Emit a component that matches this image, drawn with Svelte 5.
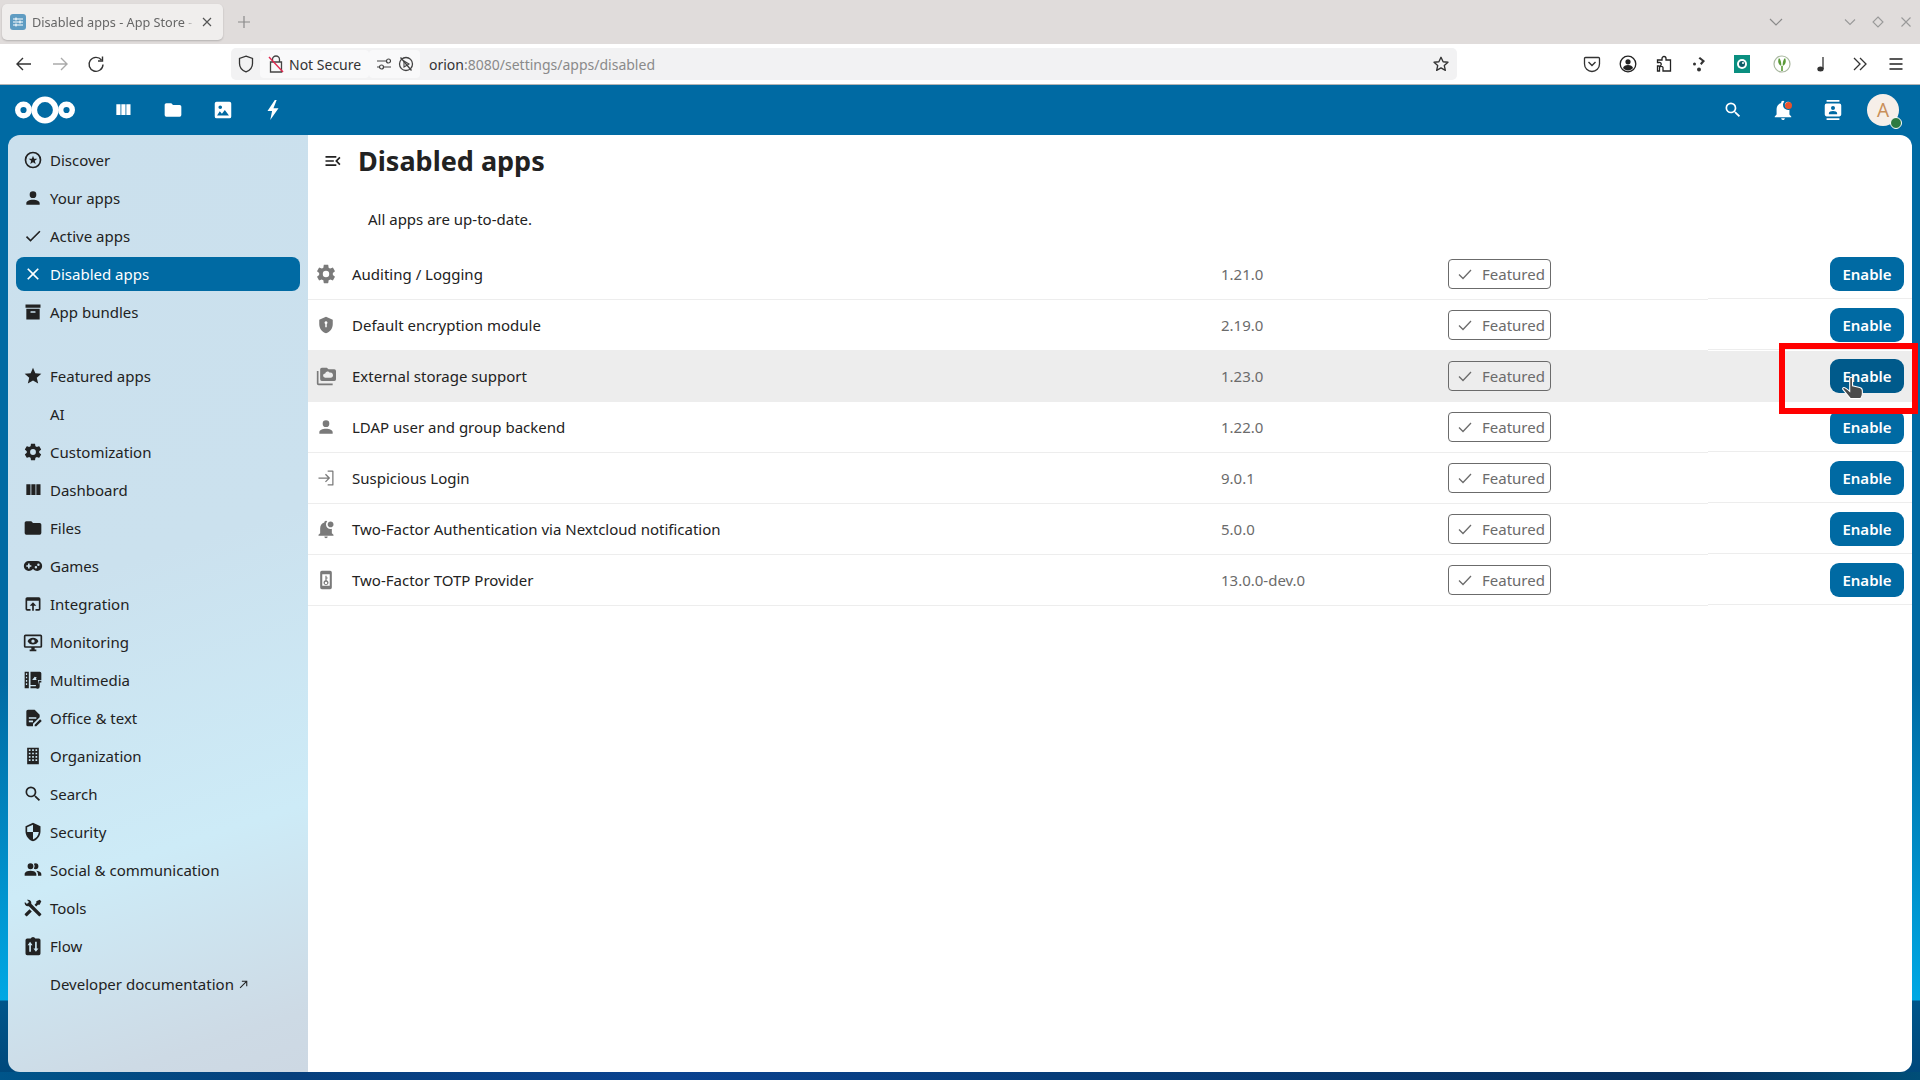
<script>
    const mdi = {
        star: 'M12 2a10 10 0 1 0 0 20a10 10 0 0 0 0-20zM12 4a8 8 0 1 1 0 16a8 8 0 0 1 0-16zM12 6.8L13.4 10.4L17.2 10.6L14.2 13L15.2 16.7L12 14.6L8.8 16.7L9.8 13L6.8 10.6L10.6 10.4Z',
        account: 'M12,4A4,4 0 0,1 16,8A4,4 0 0,1 12,12A4,4 0 0,1 8,8A4,4 0 0,1 12,4M12,14C16.42,14 20,15.79 20,18V20H4V18C4,15.79 7.58,14 12,14Z',
        check: 'M21,7L9,19L3.5,13.5L4.91,12.09L9,16.17L19.59,5.59L21,7Z',
        close: 'M19,6.41L17.59,5L12,10.59L6.41,5L5,6.41L10.59,12L5,17.59L6.41,19L12,13.41L17.59,19L19,17.59L13.41,12L19,6.41Z',
        archive: 'M3,3H21V7H3V3M4,8H20V21H4V8M9.5,11A0.5,0.5 0 0,0 9,11.5V13H15V11.5A0.5,0.5 0 0,0 14.5,11H9.5Z',
        starFull: 'M12,17.27L18.18,21L16.54,13.97L22,9.24L14.81,8.62L12,2L9.19,8.62L2,9.24L7.45,13.97L5.82,21L12,17.27Z',
        cog: 'M12,15.5A3.5,3.5 0 0,1 8.5,12A3.5,3.5 0 0,1 12,8.5A3.5,3.5 0 0,1 15.5,12A3.5,3.5 0 0,1 12,15.5M19.43,12.97C19.47,12.65 19.5,12.33 19.5,12C19.5,11.67 19.47,11.34 19.43,11L21.54,9.37C21.73,9.22 21.78,8.95 21.66,8.73L19.66,5.27C19.54,5.05 19.27,4.96 19.05,5.05L16.56,6.05C16.04,5.66 15.5,5.32 14.87,5.07L14.5,2.42C14.46,2.18 14.25,2 14,2H10C9.75,2 9.54,2.18 9.5,2.42L9.13,5.07C8.5,5.32 7.96,5.66 7.44,6.05L4.95,5.05C4.73,4.96 4.46,5.05 4.34,5.27L2.34,8.73C2.21,8.95 2.27,9.22 2.46,9.37L4.57,11C4.53,11.34 4.5,11.67 4.5,12C4.5,12.33 4.53,12.65 4.57,12.97L2.46,14.63C2.27,14.78 2.21,15.05 2.34,15.27L4.34,18.73C4.46,18.95 4.73,19.03 4.95,18.95L7.44,17.94C7.96,18.34 8.5,18.68 9.13,18.93L9.5,21.58C9.54,21.82 9.75,22 10,22H14C14.25,22 14.46,21.82 14.5,21.58L14.87,18.93C15.5,18.67 16.04,18.34 16.56,17.94L19.05,18.95C19.27,19.03 19.54,18.95 19.66,18.73L21.66,15.27C21.78,15.05 21.73,14.78 21.54,14.63L19.43,12.97Z',
        columns: 'M16,5V18H21V5M4,18H9V5H4M10,18H15V5H10V18Z',
        folder: 'M10,4H4C2.89,4 2,4.89 2,6V18A2,2 0 0,0 4,20H20A2,2 0 0,0 22,18V8C22,6.89 21.1,6 20,6H12L10,4Z',
        gamepad: 'M7,6H17A6,6 0 0,1 23,12A6,6 0 0,1 17,18C15.22,18 13.63,17.23 12.53,16H11.47C10.37,17.23 8.78,18 7,18A6,6 0 0,1 1,12A6,6 0 0,1 7,6M6,9V11H4V13H6V15H8V13H10V11H8V9H6M15.5,12A1.5,1.5 0 0,0 14,13.5A1.5,1.5 0 0,0 15.5,15A1.5,1.5 0 0,0 17,13.5A1.5,1.5 0 0,0 15.5,12M18.5,9A1.5,1.5 0 0,0 17,10.5A1.5,1.5 0 0,0 18.5,12A1.5,1.5 0 0,0 20,10.5A1.5,1.5 0 0,0 18.5,9Z',
        integration: 'M12,10L8,14H11V20H13V14H16M19,4H5C3.89,4 3,4.9 3,6V18A2,2 0 0,0 5,20H9V18H5V8H19V18H15V20H19A2,2 0 0,0 21,18V6A2,2 0 0,0 19,4Z',
        monitor: 'M3 3h18a2 2 0 0 1 2 2v12a2 2 0 0 1-2 2h-7v2h2v2H8v-2h2v-2H3a2 2 0 0 1-2-2V5a2 2 0 0 1 2-2zM3 5v12h18V5H3zM12 7c-3 0-5.5 1.6-6.5 4c1 2.4 3.5 4 6.5 4s5.5-1.6 6.5-4c-1-2.4-3.5-4-6.5-4zM12 9a2 2 0 1 1 0 4a2 2 0 0 1 0-4z',
        media: 'M2 2h5v20H2zM3.5 4v2H5V4zM3.5 8v2H5V8zM3.5 12v2H5v-2zM3.5 16v2H5v-2zM9 2h11a2 2 0 0 1 2 2v8H18v6H9zM11 12h5.5l-1-1.5 1-1.5-2.5-1zM19 13h3v2h-2v5a2.5 2.5 0 1 1-2-2.45zM9 19.5h6.5V22H9z',
        office: 'M6 2h8l6 6v3l-8 8v3H6a2 2 0 0 1-2-2V4a2 2 0 0 1 2-2zM7 11v2h9v-2zM7 15v2h5v-2zM14 22v-2l6.5-6.5 2 2L16 22z',
        search: 'M9.5,3A6.5,6.5 0 0,1 16,9.5C16,11.11 15.41,12.59 14.44,13.73L14.71,14H15.5L20.5,19L19,20.5L14,15.5V14.71L13.73,14.44C12.59,15.41 11.11,16 9.5,16A6.5,6.5 0 0,1 3,9.5A6.5,6.5 0 0,1 9.5,3M9.5,5C7,5 5,7 5,9.5C5,12 7,14 9.5,14C12,14 14,12 14,9.5C14,7 12,5 9.5,5Z',
        security: 'M12,1L3,5V11C3,16.55 6.84,21.74 12,23C17.16,21.74 21,16.55 21,11V5L12,1M12,12H19C18.47,16.12 15.72,19.79 12,20.93V12H5V6.3L12,3.19V12Z',
        people: 'M16 17V19H2V17S2 13 9 13 16 17 16 17M12.5 7.5A3.5 3.5 0 1 0 9 11A3.5 3.5 0 0 0 12.5 7.5M15.94 13A5.32 5.32 0 0 1 18 17V19H22V17S22 13.37 15.94 13M15 4A3.39 3.39 0 0 0 13.07 4.59A5 5 0 0 1 13.07 10.41A3.39 3.39 0 0 0 15 11A3.5 3.5 0 0 0 15 4Z',
        tools: 'M21.71 20.29L20.29 21.71A1 1 0 0 1 18.88 21.71L7 9.85A3.81 3.81 0 0 1 6 10A4 4 0 0 1 2.22 4.7L4.76 7.24L5.29 6.71L6.71 5.29L7.24 4.76L4.7 2.22A4 4 0 0 1 10 6A3.81 3.81 0 0 1 9.85 7L21.71 18.88A1 1 0 0 1 21.71 20.29M2.29 18.88A1 1 0 0 0 2.29 20.29L3.71 21.71A1 1 0 0 0 5.12 21.71L10.59 16.25L7.76 13.42M20 2L16 4V6L13.83 8.17L15.83 10.17L18 8H20L22 4Z',
        flow: 'M19 3h-4.2a3 3 0 0 0-5.6 0H5a2 2 0 0 0-2 2v16a2 2 0 0 0 2 2h14a2 2 0 0 0 2-2V5a2 2 0 0 0-2-2zM8.5 7l3 4H9.5v8h-2v-8H5.5zM14.5 7h2v8h2l-3 4-3-4h2z',
        arrow: 'M5,17.59L15.59,7H9V5H19V15H17V8.41L6.41,19L5,17.59Z',
        menuOpen: 'M21,15.61L19.59,17L14.58,12L19.59,7L21,8.39L17.44,12L21,15.61M3,6H16V8H3V6M3,13V11H13V13H3M3,18V16H16V18H3Z',
        shieldKey: 'M12 1L3 5v6c0 5.55 3.84 10.74 9 12 5.16-1.26 9-6.45 9-12V5l-9-4zM12 7a2 2 0 0 1 1 3.7V15h-2v-4.3A2 2 0 0 1 12 7z',
        storage: 'M22 4h-7l-2-2H7a2 2 0 0 0-2 2v12a2 2 0 0 0 2 2h15a2 2 0 0 0 2-2V6a2 2 0 0 0-2-2zM1 6v15a2 2 0 0 0 2 2h17v-2H3V6zM11 14a2.5 2.5 0 0 1 0-5a3 3 0 0 1 5.5-1a3 3 0 0 1 1.5 6z',
        login: 'M14 3h6a1 1 0 0 1 1 1v16a1 1 0 0 1-1 1h-6v-1.5h5.5v-15H14zM3 11.25h11.1l-3.3-3.3 1.1-1.05L17 12l-5.1 5.1-1.1-1.05 3.3-3.3H3z',
        bellDot: 'M21,6.5C21,8.43 19.43,10 17.5,10C15.57,10 14,8.43 14,6.5C14,4.57 15.57,3 17.5,3C19.43,3 21,4.57 21,6.5M19,11.79C18.5,11.92 18,12 17.5,12A5.5,5.5 0 0,1 12,6.5C12,5.03 12.58,3.7 13.5,2.71C13.15,2.28 12.61,2 12,2C10.9,2 10,2.9 10,4V4.29C7.03,5.17 5,7.9 5,11V17L3,19V20H21V19L19,17V11.79M12,23C13.11,23 14,22.11 14,21H10A2,2 0 0,0 12,23Z',
        phoneKey: 'M7 1h10a2 2 0 0 1 2 2v18a2 2 0 0 1-2 2H7a2 2 0 0 1-2-2V3a2 2 0 0 1 2-2zM7.5 5v14h9V5zM11.3 7h1.4v2H14v1.2h-1.3v2.1a3 3 0 1 1-1.4 0zM12 14a1.5 1.5 0 1 0 0 3a1.5 1.5 0 0 0 0-3z',
        bolt: 'M14 1L6 13h5l-2 10 9-13h-5.5l3.5-9z',
        image: 'M5 3h14a2 2 0 0 1 2 2v14a2 2 0 0 1-2 2H5a2 2 0 0 1-2-2V5a2 2 0 0 1 2-2zM9 7a2 2 0 1 0 0 4a2 2 0 0 0 0-4zM5.5 18h13L14 12l-3.2 4-2.3-2.6z',
        contacts: 'M5 1h14v2H5zM5 21h14v2H5zM5 5h14a2 2 0 0 1 2 2v10a2 2 0 0 1-2 2H5a2 2 0 0 1-2-2V7a2 2 0 0 1 2-2zM12 7.5a2.2 2.2 0 1 0 0 4.4a2.2 2.2 0 0 0 0-4.4zM7.5 16.5h9v-1c0-1.6-2.2-2.5-4.5-2.5s-4.5.9-4.5 2.5z'
    };

    let domain = 'M5 2h14v20H5z';
    for (const y of [4, 8, 12, 16]) {
        for (const x of [7, 11, 15]) {
            domain += `M${x} ${y}v2h2v-2z`;
        }
    }

    const topNav = [
        { label: 'Discover', d: mdi.star },
        { label: 'Your apps', d: mdi.account },
        { label: 'Active apps', d: mdi.check },
        { label: 'Disabled apps', d: mdi.close, active: true },
        { label: 'App bundles', d: mdi.archive }
    ];

    const categories = [
        { label: 'Featured apps', d: mdi.starFull },
        { label: 'AI' },
        { label: 'Customization', d: mdi.cog },
        { label: 'Dashboard', d: mdi.columns },
        { label: 'Files', d: mdi.folder },
        { label: 'Games', d: mdi.gamepad },
        { label: 'Integration', d: mdi.integration },
        { label: 'Monitoring', d: mdi.monitor },
        { label: 'Multimedia', d: mdi.media },
        { label: 'Office & text', d: mdi.office },
        { label: 'Organization', d: domain },
        { label: 'Search', d: mdi.search },
        { label: 'Security', d: mdi.security },
        { label: 'Social & communication', d: mdi.people },
        { label: 'Tools', d: mdi.tools },
        { label: 'Flow', d: mdi.flow }
    ];

    const apps = [
        { name: 'Auditing / Logging', version: '1.21.0', d: mdi.cog, size: 22 },
        { name: 'Default encryption module', version: '2.19.0', d: mdi.shieldKey, size: 18 },
        { name: 'External storage support', version: '1.23.0', d: mdi.storage, size: 20, hover: true },
        { name: 'LDAP user and group backend', version: '1.22.0', d: mdi.account, size: 20 },
        { name: 'Suspicious Login', version: '9.0.1', d: mdi.login, size: 20 },
        { name: 'Two-Factor Authentication via Nextcloud notification', version: '5.0.0', d: mdi.bellDot, size: 20 },
        { name: 'Two-Factor TOTP Provider', version: '13.0.0-dev.0', d: mdi.phoneKey, size: 20 }
    ];
</script>

{#snippet icon(d, size = 20)}
    <svg class="ic" width={size} height={size} viewBox="0 0 24 24" fill="currentColor"><path {d} /></svg>
{/snippet}

<div class="screen">
    <!-- browser tabs -->
    <div class="tabbar">
        <div class="tab">
            <svg class="favicon" width="16" height="16" viewBox="0 0 16 16">
                <rect width="16" height="16" rx="3" fill="#5f9cc2" />
                <path d="M3 5h10M3 8h10M3 11h10" stroke="#fff" stroke-width="1.1" />
                <path d="M6 3.5v3M10 6.5v3M6 9.5v3" stroke="#fff" stroke-width="1.1" />
            </svg>
            <span class="tab-title">Disabled apps - App Store -</span>
            <svg class="tab-close" width="12" height="12" viewBox="0 0 12 12"><path d="M2 2l8 8M10 2l-8 8" stroke="#555" stroke-width="1.2" /></svg>
        </div>
        <svg class="new-tab" width="14" height="14" viewBox="0 0 14 14"><path d="M7 1v12M1 7h12" stroke="#8a8a8a" stroke-width="1.2" /></svg>
        <svg class="tab-list" width="16" height="16" viewBox="0 0 16 16"><path d="M2 5l6 6 6-6" fill="none" stroke="#8a8a8a" stroke-width="1.2" /></svg>
        <div class="window-btns">
            <span><svg width="12" height="12" viewBox="0 0 12 12"><path d="M1 3.5l5 5 5-5" fill="none" stroke="#999" stroke-width="1.1" /></svg></span>
            <span><svg width="12" height="12" viewBox="0 0 12 12"><path d="M6 1l5 5-5 5-5-5z" fill="none" stroke="#999" stroke-width="1.1" /></svg></span>
            <span><svg width="12" height="12" viewBox="0 0 12 12"><path d="M1.5 1.5l9 9M10.5 1.5l-9 9" stroke="#999" stroke-width="1.1" /></svg></span>
        </div>
    </div>

    <!-- browser toolbar -->
    <div class="toolbar">
        <div class="tool-nav">
            <span class="tool"><svg width="18" height="18" viewBox="0 0 18 18"><path d="M16 9H2M8 3L2 9l6 6" fill="none" stroke="#333" stroke-width="1.4" /></svg></span>
            <span class="tool"><svg width="18" height="18" viewBox="0 0 18 18"><path d="M2 9h14M10 3l6 6-6 6" fill="none" stroke="#aaa" stroke-width="1.4" /></svg></span>
            <span class="tool"><svg width="18" height="18" viewBox="0 0 18 18"><path d="M14.5 5A7 7 0 1 0 16 9.5" fill="none" stroke="#333" stroke-width="1.4" /><path d="M15.5 1.5v4.5H11" fill="none" stroke="#333" stroke-width="1.4" /></svg></span>
        </div>
        <div class="urlbar">
            <span class="url-shield">
                <svg width="16" height="18" viewBox="0 0 16 18"><path d="M8 1.2l6.5 2.2v5c0 4-2.8 7-6.5 8.4-3.700-1.400-6.500-4.400-6.500-8.400v-5z" fill="none" stroke="#333" stroke-width="1.3" /></svg>
            </span>
            <span class="url-box lock">
                <svg width="16" height="20" viewBox="0 0 16 20">
                    <path d="M4.500 8V5.500a3.500 3.500 0 0 1 7 0V8M2.500 8h11v10h-11z" fill="none" stroke="#444" stroke-width="1.3" />
                    <path d="M1 3l14 15" stroke="#e22850" stroke-width="1.4" />
                </svg>
                Not Secure
            </span>
            <span class="url-box perms">
                <svg width="16" height="14" viewBox="0 0 16 14"><path d="M1 4h9M1 10h2M8 10h7" stroke="#444" stroke-width="1.2" /><circle cx="12.500" cy="4" r="2" fill="none" stroke="#444" stroke-width="1.2" /><circle cx="5.500" cy="10" r="2" fill="none" stroke="#444" stroke-width="1.2" /></svg>
                <svg width="16" height="16" viewBox="0 0 16 16"><circle cx="8" cy="8" r="6.500" fill="none" stroke="#444" stroke-width="1.3" /><path d="M6 5v6l5-3z" fill="none" stroke="#444" stroke-width="1.1" /><path d="M2.500 1.500l11 13" stroke="#444" stroke-width="1.3" /></svg>
            </span>
            <span class="url-text">orion<span class="url-rest">:8080/settings/apps/disabled</span></span>
            <svg class="url-star" width="18" height="18" viewBox="0 0 24 24"><path d="M12 3l2.800 6 6.500.7-4.900 4.400 1.400 6.400L12 17.200 6.200 20.500l1.400-6.400L2.700 9.700 9.200 9z" fill="none" stroke="#333" stroke-width="1.800" stroke-linejoin="round" /></svg>
        </div>
        <div class="tool-right">
            <span class="tool"><svg width="18" height="18" viewBox="0 0 18 18"><path d="M2.500 2.500h13a1 1 0 0 1 1 1V9a7.500 7.500 0 0 1-15 0V3.500a1 1 0 0 1 1-1z" fill="none" stroke="#333" stroke-width="1.3" /><path d="M5.500 7L9 10.500 12.500 7" fill="none" stroke="#333" stroke-width="1.4" /></svg></span>
            <span class="tool"><svg width="18" height="18" viewBox="0 0 18 18"><circle cx="9" cy="9" r="7.800" fill="none" stroke="#222" stroke-width="1.300" /><circle cx="9" cy="6.800" r="2.600" fill="#222" /><path d="M4 13c.5-2 2.500-3 5-3s4.500 1 5 3c-1.200 1.600-3 2.500-5 2.500S5.200 14.600 4 13z" fill="#222" /></svg></span>
            <span class="tool"><svg width="18" height="18" viewBox="0 0 18 18"><path d="M7 3.500a2 2 0 0 1 4 0V5h4.500v11H8v-2.500a1.800 1.800 0 1 0-3.500 0V16H2.500v-5H4a1.800 1.800 0 1 0 0-3.500H2.500V5H7z" fill="none" stroke="#222" stroke-width="1.300" /></svg></span>
            <span class="tool gap"><svg width="18" height="18" viewBox="0 0 18 18"><path d="M9 2l5 4-3.500 4-1.500-1.500L11 6 7.500 3.500z" fill="#333" /><circle cx="3.500" cy="9" r="1.500" fill="#333" /><circle cx="8" cy="14.500" r="2" fill="#333" /></svg></span>
            <span class="tool wide"><svg width="16" height="18" viewBox="0 0 16 18"><rect width="16" height="18" fill="#0a8f80" /><circle cx="8" cy="9" r="5" fill="#fff" /><circle cx="8" cy="9" r="3" fill="#0d5c66" /><circle cx="9" cy="8" r="1" fill="#fff" /></svg></span>
            <span class="tool wide"><svg width="18" height="18" viewBox="0 0 18 18"><circle cx="9" cy="9" r="8" fill="#fff" stroke="#a9b8a0" stroke-width="1.200" /><path d="M6 3c-1.500 3-1 6 2.200 8C8.500 8 8 5 6 3zM12 3c1.500 3 1 6-2.200 8C9.500 8 10 5 12 3z" fill="#5a9a38" /><path d="M9 11v5" stroke="#5a9a38" stroke-width="1.600" /></svg></span>
            <span class="tool wide"><svg width="18" height="18" viewBox="0 0 18 18"><ellipse cx="7.500" cy="14" rx="3.200" ry="2.500" fill="#333" /><path d="M10 14V2" stroke="#333" stroke-width="1.300" /></svg></span>
            <span class="tool"><svg width="16" height="16" viewBox="0 0 16 16"><path d="M2 2l6 6-6 6M8 2l6 6-6 6" fill="none" stroke="#333" stroke-width="1.300" /></svg></span>
            <span class="tool"><svg width="16" height="16" viewBox="0 0 16 16"><path d="M1.500 3h13M1.500 8h13M1.500 13h13" stroke="#222" stroke-width="1.400" /></svg></span>
        </div>
    </div>

    <!-- nextcloud header -->
    <header class="nc-header">
        <svg class="logo" width="60" height="28" viewBox="0 0 60 28">
            <circle cx="30" cy="14" r="10.700" fill="none" stroke="#fff" stroke-width="5.600" />
            <circle cx="8.500" cy="14" r="5.800" fill="none" stroke="#fff" stroke-width="5.400" />
            <circle cx="51.500" cy="14" r="5.800" fill="none" stroke="#fff" stroke-width="5.400" />
        </svg>
        <div class="nc-apps">
            <span>{@render icon(mdi.columns)}</span>
            <span>{@render icon(mdi.folder)}</span>
            <span>{@render icon(mdi.image, 22)}</span>
            <span>{@render icon(mdi.bolt, 22)}</span>
        </div>
        <div class="nc-right">
            <span>{@render icon(mdi.search)}</span>
            <span class="bell">
                {@render icon(mdi.bellDot, 22)}
                <i class="bell-dot"></i>
            </span>
            <span>{@render icon(mdi.contacts, 22)}</span>
            <span class="avatar-wrap">
                <span class="avatar">A</span>
                <i class="status"></i>
            </span>
        </div>
    </header>

    <div class="content">
        <nav class="sidebar">
            <ul>
                {#each topNav as item}
                    <li class:active={item.active}>
                        <span class="nav-ic">{@render icon(item.d)}</span>{item.label}
                    </li>
                {/each}
            </ul>
            <ul class="cats">
                {#each categories as item}
                    <li>
                        <span class="nav-ic">{#if item.d}{@render icon(item.d)}{/if}</span>{item.label}
                    </li>
                {/each}
                <li>
                    <span class="nav-ic"></span>Developer documentation
                    <span class="ext">{@render icon(mdi.arrow, 13)}</span>
                </li>
            </ul>
        </nav>

        <main class="main">
            <div class="head">
                <span class="toggle">{@render icon(mdi.menuOpen)}</span>
                <h1>Disabled apps</h1>
            </div>
            <p class="uptodate">All apps are up-to-date.</p>

            <div class="rows">
                {#each apps as app}
                    <div class="row" class:hover={app.hover}>
                        <div class="cell name">
                            <span class="app-ic">{@render icon(app.d, app.size)}</span>
                            {app.name}
                        </div>
                        <div class="cell version">{app.version}</div>
                        <div class="cell">
                            <span class="tag">
                                <svg width="16" height="16" viewBox="0 0 16 16"><path d="M2 8.500l4 4 8-8.500" fill="none" stroke="#6b6b6b" stroke-width="1.300" /></svg>
                                Featured
                            </span>
                        </div>
                        <div class="cell action">
                            <button>Enable</button>
                        </div>
                    </div>
                {/each}
            </div>
        </main>
    </div>

    <div class="strip"></div>

    <!-- annotation and mouse pointer on top of the page -->
    <div class="highlight"></div>
    <svg class="cursor" width="22" height="22" viewBox="0 0 20 20">
        <path d="M7 1.500a1.300 1.300 0 0 1 2.600 0V8l6.500 1.500c1.500.4 2.400 1.300 2.400 3v3c0 1.500-.5 2.500-1.500 4H7.500L1 11.500c-.8-1-.2-2 .8-2 .8 0 3 1.500 5.200 3.500z" fill="#4a4a4a" stroke="#fff" stroke-width="1" />
    </svg>
</div>

<style>
    :global(body) {
        margin: 0;
    }

    .screen {
        position: relative;
        display: flex;
        flex-direction: column;
        width: 1920px;
        height: 1080px;
        overflow: hidden;
        font-family: "Noto Sans", sans-serif;
        font-size: 15px;
        color: #222;
        background: linear-gradient(180deg, #006aa3 0, #006aa3 680px, #00a8e4 1000px, #00558a 1001px, #00477a 1080px);
    }

    .ic {
        display: block;
        flex-shrink: 0;
    }

    /* tabs */
    .tabbar {
        display: flex;
        align-items: center;
        height: 44px;
        background: #e0dcdb;
    }

    .tab {
        display: flex;
        align-items: center;
        width: 221px;
        height: 36px;
        margin-left: 2px;
        padding-left: 8px;
        box-sizing: border-box;
        background: #f0eeed;
        border-radius: 5px;
        box-shadow: 0 1px 2px rgba(0, 0, 0, .2);
    }

    .tab-title {
        width: 162px;
        margin-left: 6px;
        white-space: nowrap;
        font-size: 12.7px;
        color: #666;
        -webkit-mask-image: linear-gradient(90deg, #000 94%, transparent);
        mask-image: linear-gradient(90deg, #000 94%, transparent);
    }

    .tab-close {
        margin-left: 7px;
    }

    .new-tab {
        margin-left: 14px;
    }

    .tab-list {
        margin-left: auto;
    }

    .window-btns {
        display: flex;
        margin-left: 52px;
    }

    .window-btns span {
        display: flex;
        justify-content: center;
        width: 28px;
    }

    /* toolbar */
    .toolbar {
        display: flex;
        align-items: center;
        height: 40px;
        background: #fff;
        border-bottom: 1px solid #b4b4b4;
    }

    .tool-nav {
        display: flex;
        width: 231px;
        padding-left: 6px;
        box-sizing: border-box;
    }

    .tool {
        display: flex;
        align-items: center;
        justify-content: center;
        width: 36px;
        height: 32px;
    }

    .tool.wide {
        width: 40px;
    }

    .tool.gap {
        margin-right: 4px;
    }

    .urlbar {
        display: flex;
        align-items: center;
        width: 1226px;
        height: 32px;
        background: #f2f2f3;
        border-radius: 5px;
    }

    .url-shield {
        display: flex;
        justify-content: center;
        width: 29px;
    }

    .url-box {
        display: flex;
        align-items: center;
        height: 28px;
        background: #f9f9fa;
        border-radius: 4px;
    }

    .lock {
        gap: 5px;
        width: 109px;
        padding-left: 8px;
        box-sizing: border-box;
        font-size: 14px;
        color: #333;
    }

    .perms {
        gap: 6px;
        justify-content: center;
        width: 51px;
    }

    .url-text {
        margin-left: 9px;
        font-size: 14px;
        color: #333;
    }

    .url-rest {
        color: #8a8a8a;
    }

    .url-star {
        margin-left: auto;
        margin-right: 7px;
    }

    .tool-right {
        display: flex;
        margin-left: auto;
        margin-right: 6px;
    }

    /* nextcloud header */
    .nc-header {
        display: flex;
        align-items: center;
        height: 50px;
        color: #fff;
    }

    .logo {
        margin-left: 15px;
    }

    .nc-apps {
        display: flex;
        margin-left: 23px;
    }

    .nc-apps span,
    .nc-right span {
        display: flex;
        align-items: center;
        justify-content: center;
        width: 50px;
        height: 50px;
    }

    .nc-right {
        display: flex;
        margin-left: auto;
        margin-right: 12px;
    }

    .bell,
    .avatar-wrap {
        position: relative;
    }

    .bell-dot {
        position: absolute;
        top: 17px;
        left: 27px;
        width: 7px;
        height: 7px;
        border-radius: 50%;
        background: #e9522c;
    }

    .nc-right .avatar {
        width: 32px;
        height: 32px;
        border-radius: 50%;
        background: #f6efe9;
        color: #c98f5a;
        font-size: 19px;
    }

    .status {
        position: absolute;
        top: 32px;
        left: 32px;
        width: 10px;
        height: 10px;
        border: 1.5px solid #fff;
        border-radius: 50%;
        background: #2d7b41;
    }

    /* content */
    .content {
        display: flex;
        flex: 1;
        min-height: 0;
        margin: 0 8px;
        border-radius: 12px;
        overflow: hidden;
    }

    .sidebar {
        width: 300px;
        padding: 8px;
        box-sizing: border-box;
        background: linear-gradient(162deg, #cbe0ed 0%, #cbe1ee 45%, #cdebf7 74%, #cddae5 94%, #cdd8e3 100%);
    }

    ul {
        margin: 0;
        padding: 0;
        list-style: none;
    }

    li {
        display: flex;
        align-items: center;
        height: 34px;
        margin-bottom: 4px;
        border-radius: 8px;
        white-space: nowrap;
    }

    li.active {
        background: #006aa3;
        color: #fff;
    }

    .cats {
        margin-top: 30px;
    }

    .nav-ic {
        display: flex;
        justify-content: center;
        width: 34px;
    }

    .ext {
        margin-left: 3px;
    }

    .main {
        flex: 1;
        background: #fff;
    }

    .head {
        display: flex;
        align-items: center;
        height: 50px;
        padding-bottom: 2px;
    }

    .toggle {
        display: flex;
        justify-content: center;
        width: 50px;
        margin-top: 2px;
    }

    h1 {
        margin: 0;
        font-size: 27px;
        font-weight: 700;
    }

    .uptodate {
        margin: 22px 0 20px 60px;
        line-height: 20px;
    }

    .row {
        display: grid;
        grid-template-columns: 913px 227px 260px 204px;
        height: 51px;
    }

    .row.hover {
        background: #ededed;
    }

    .cell {
        display: flex;
        align-items: center;
        height: 50px;
        border-bottom: 1px solid #ededed;
    }

    .row.hover .cell {
        border-bottom-color: transparent;
    }

    .name {
        padding-left: 8px;
    }

    .app-ic {
        display: flex;
        justify-content: center;
        width: 20px;
        margin-right: 16px;
        color: #7a7a7a;
    }

    .version {
        color: #6b6b6b;
    }

    .tag {
        display: flex;
        align-items: center;
        gap: 9px;
        width: 103px;
        height: 30px;
        padding-left: 8px;
        box-sizing: border-box;
        border: 1px solid #6b6b6b;
        border-radius: 4px;
        color: #6b6b6b;
    }

    .action {
        justify-content: flex-end;
        height: 49px;
        padding-right: 8px;
    }

    button {
        width: 74px;
        height: 34px;
        margin-top: 1px;
        padding: 0;
        border: 0;
        border-radius: 9px;
        background: #006aa3;
        color: #fff;
        font-family: inherit;
        font-size: 15px;
        font-weight: 600;
    }

    .row.hover button {
        background: #005a8b;
    }

    .strip {
        height: 8px;
        background: linear-gradient(90deg, #00558a 0, #063f7c 15%, #0a4290 35%, #063c78 55%, #07305f 88%, #004e78 100%);
    }

    .highlight {
        position: absolute;
        left: 1779px;
        top: 343px;
        width: 127px;
        height: 59px;
        border: 6px solid #f00;
    }

    .cursor {
        position: absolute;
        left: 1842px;
        top: 377px;
    }
</style>
